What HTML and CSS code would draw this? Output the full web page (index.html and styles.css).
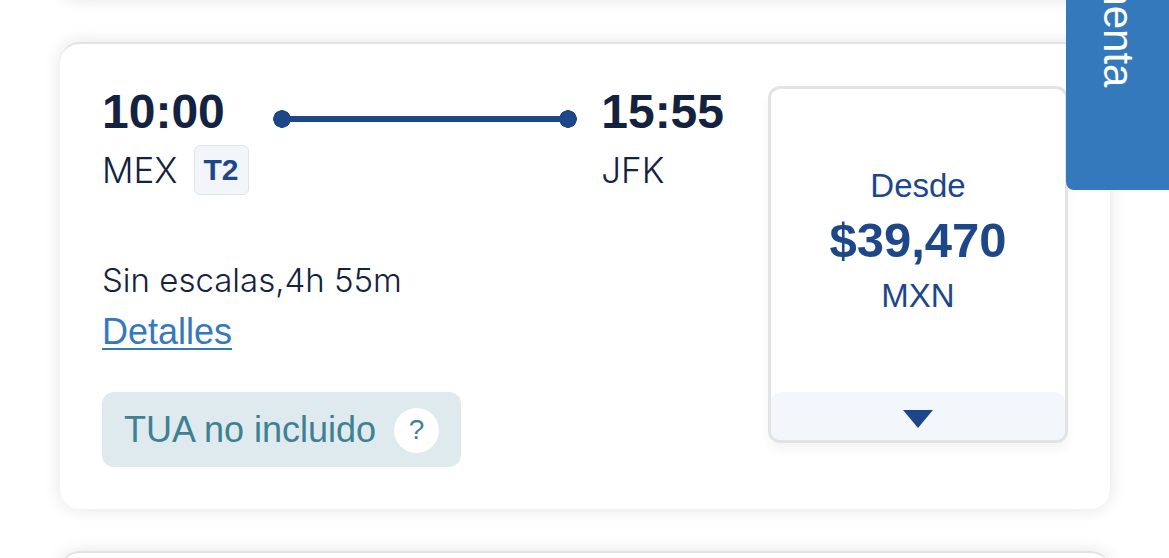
FILE: index.html
```html
<!DOCTYPE html>
<html lang="es">
<head>
<meta charset="utf-8">
<title>Vuelos</title>
<link rel="stylesheet" href="styles.css">
</head>
<body>
<main class="results">
  <article class="card card-previous"></article>
  <article class="card">
    <div class="flight">
      <div class="route">
        <div class="stop">
          <div class="time">10:00</div>
          <div class="airport">MEX <span class="terminal">T2</span></div>
        </div>
        <div class="track"></div>
        <div class="stop">
          <div class="time">15:55</div>
          <div class="airport">JFK</div>
        </div>
      </div>
      <div class="summary">Sin escalas,4h 55m</div>
      <a class="details" href="#">Detalles</a>
      <div class="tax">
        <span>TUA no incluido</span>
        <button class="help" type="button">?</button>
      </div>
    </div>
    <button class="fare" type="button">
      <span class="fare-body">
        <span class="fare-label">Desde</span>
        <span class="fare-amount">$39,470</span>
        <span class="fare-label">MXN</span>
      </span>
      <span class="fare-toggle">
        <svg width="30" height="18" viewBox="0 0 30 18" aria-hidden="true"><path d="M0 0H30L15 18Z" fill="#1d4789"/></svg>
      </span>
    </button>
  </article>
  <article class="card card-next"></article>
</main>
<button class="feedback" type="button">Comenta</button>
</body>
</html>
```

FILE: styles.css
```css
* {
  box-sizing: border-box;
}

body {
  margin: 0;
  overflow: hidden;
  background: #fff;
  color: #13223f;
  font-family: "Liberation Sans", Arial, sans-serif;
  font-size: 36px;
}

button {
  border: 0;
  padding: 0;
  font-family: inherit;
  cursor: pointer;
}

.results {
  display: flex;
  flex-direction: column;
  gap: 42px;
  padding: 0 59px 0 60px;
}

.card {
  display: flex;
  align-items: flex-start;
  gap: 44px;
  padding: 42px;
  border-top: 2px solid #e2e2e2;
  border-radius: 20px;
  background: #fff;
  box-shadow: 0 0 18px rgba(0, 0, 0, 0.11);
}

.card-previous {
  margin-top: -86px;
}

.flight {
  flex: 1;
  display: flex;
  flex-direction: column;
  align-items: flex-start;
}

.route {
  align-self: stretch;
  display: flex;
  gap: 24px;
}

.time {
  font-size: 48px;
  font-weight: 700;
  line-height: 52px;
}

.airport {
  display: flex;
  align-items: center;
  gap: 16px;
  height: 50px;
  margin-top: 7px;
  font-family: Inter, "Liberation Sans", sans-serif;
  font-weight: 300;
  font-size: 35px;
}

.terminal {
  padding: 0 9px;
  border: 1px solid #dfe5ec;
  border-radius: 6px;
  background: #f2f6fa;
  color: #1d4789;
  font-family: "Liberation Sans", Arial, sans-serif;
  font-size: 30px;
  font-weight: 700;
  line-height: 48px;
}

.track {
  flex: 1;
  height: 18px;
  margin-top: 24px;
  background:
    radial-gradient(circle closest-side, #1d4789 95%, transparent) left / 18px 18px no-repeat,
    radial-gradient(circle closest-side, #1d4789 95%, transparent) right / 18px 18px no-repeat,
    linear-gradient(#1d4789, #1d4789) center / calc(100% - 18px) 6px no-repeat;
}

.summary {
  margin-top: 60px;
  font-family: Inter, "Liberation Sans", sans-serif;
  font-size: 33px;
  font-weight: 300;
  line-height: 51px;
}

.details {
  color: #3579bd;
  line-height: 51px;
  text-decoration-thickness: 2px;
  text-underline-offset: 4px;
}

.tax {
  display: flex;
  align-items: center;
  gap: 18px;
  height: 75px;
  margin-top: 35px;
  padding: 1px 22px 0;
  border-radius: 12px;
  background: #dfeaee;
  color: #3f8093;
}

.help {
  width: 45px;
  height: 45px;
  border-radius: 50%;
  background: #fff;
  color: inherit;
  font-size: 28px;
}

.fare {
  display: flex;
  flex-direction: column;
  width: 300px;
  border: 3px solid #e2e3e4;
  border-radius: 12px;
  background: #fff;
  color: #1d4789;
  box-shadow: 0 8px 10px rgba(0, 0, 0, 0.04);
}

.fare-body {
  display: flex;
  flex-direction: column;
  align-items: center;
  align-self: stretch;
  padding: 69px 0;
}

.fare-label {
  font-size: 33px;
  line-height: 55px;
}

.fare-amount {
  font-size: 49px;
  font-weight: 700;
  line-height: 55px;
}

.fare-toggle {
  display: flex;
  align-items: center;
  justify-content: center;
  align-self: stretch;
  height: 48px;
  padding-top: 5px;
  border-radius: 10px;
  background: #f3f7fb;
}

.feedback {
  position: absolute;
  top: -120px;
  right: 0;
  width: 103px;
  height: 310px;
  padding-bottom: 103px;
  border-radius: 0 0 0 8px;
  background: #3579bd;
  color: #fff;
  font-size: 42px;
  text-align: right;
  writing-mode: vertical-rl;
}
```
